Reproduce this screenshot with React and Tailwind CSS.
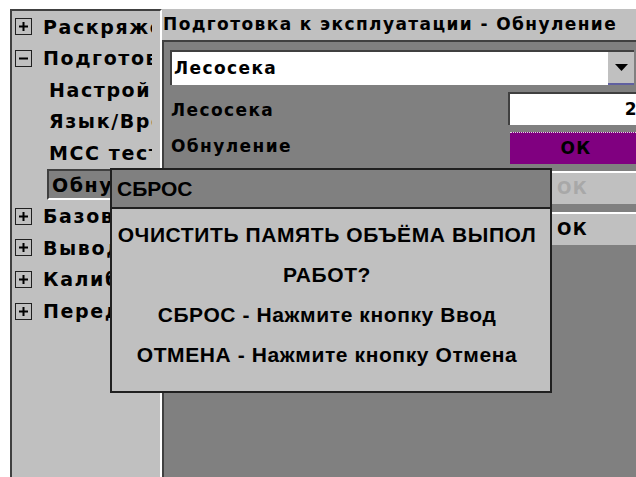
import React from "react";

const SANS = "font-['Liberation_Sans',Arial,sans-serif]";
const WIDE = "font-['DejaVu_Sans',Verdana,sans-serif]";

const treeItems = [
    { label: "Раскряжевка", box: "+" },
    { label: "Подготовка", box: "-" },
    { label: "Настройки", indent: true },
    { label: "Язык/Время", indent: true },
    { label: "МСС тест", indent: true },
    { label: "Обнуление", indent: true, selected: true },
    { label: "Базовые", box: "+" },
    { label: "Вывод", box: "+" },
    { label: "Калибровка", box: "+" },
    { label: "Передача", box: "+" },
];

const ExpandBox = ({ sign }) => (
    <span className="w-[17px] h-[17px] border border-[#202020] bg-[#c0c0c0] flex items-center justify-center shrink-0">
        <svg width="11" height="11" viewBox="0 0 11 11">
            <rect x="1" y="4.5" width="9" height="2" fill="#000" />
            {sign === "+" && <rect x="4.5" y="1" width="2" height="9" fill="#000" />}
        </svg>
    </span>
);

const TreeRow = ({ item }) => {
    if (item.box) {
        return (
            <div className="h-[31.6px] flex items-center pl-[3px] gap-[11px]">
                <ExpandBox sign={item.box} />
                <span className="whitespace-nowrap">{item.label}</span>
            </div>
        );
    }
    if (item.selected) {
        return (
            <div className="h-[31.6px] flex items-center pl-[35px]">
                <span className="h-[31px] w-[80px] flex items-center pl-[3px] bg-[#808080] border-t-2 border-l-2 border-[#404040] border-b-2 border-b-white whitespace-nowrap">
                    {item.label}
                </span>
            </div>
        );
    }
    return (
        <div className="h-[31.6px] flex items-center pl-[37px]">
            <span className="whitespace-nowrap">{item.label}</span>
        </div>
    );
};

const ResetDialog = () => (
    <div className={`absolute left-[110px] top-[168px] w-[442px] h-[225px] border-2 border-[#202020] bg-[#c0c0c0] flex flex-col ${SANS}`}>
        <div className="h-[39px] bg-[#808080] border-b-2 border-[#202020] flex items-center pl-[5px] text-[21px]">
            СБРОС
        </div>
        <div className="flex flex-col items-center pt-[6px] pr-[8px] text-[21px] leading-[40px] tracking-[0.6px]">
            <span className="whitespace-nowrap">ОЧИСТИТЬ ПАМЯТЬ ОБЪЁМА ВЫПОЛ</span>
            <span>РАБОТ?</span>
            <span>СБРОС - Нажмите кнопку Ввод</span>
            <span>ОТМЕНА - Нажмите кнопку Отмена</span>
        </div>
    </div>
);

export default function App() {
    return (
        <div className={`relative w-[636px] h-[477px] bg-white overflow-hidden font-bold text-black ${WIDE}`}>
            <div className="flex h-full pt-[9px] pl-[10px]">
                {/* tree menu */}
                <div className="w-[152px] shrink-0 h-full bg-[#c0c0c0] border-l-2 border-t-2 border-[#404040] border-r-2 border-r-white text-[19px] tracking-[1.6px]">
                    <div className="w-[140px] overflow-hidden">
                        {treeItems.map((item) => (
                            <TreeRow key={item.label} item={item} />
                        ))}
                    </div>
                </div>

                {/* page */}
                <div className="w-[478px] shrink-0 flex flex-col text-[17px] tracking-[1.4px]">
                    <div className="h-[31px] bg-[#c0c0c0] flex items-center pl-[1px] whitespace-nowrap">
                        Подготовка к эксплуатации - Обнуление
                    </div>
                    <div className="flex-1 bg-[#808080] border-t-2 border-l-2 border-[#404040] pl-[6px] pt-[8px] flex flex-col">
                        <div className="h-[35px] mr-[6px] bg-white border-t-2 border-l-2 border-[#404040] flex items-center">
                            <span className="flex-1 pl-[2px]">Лесосека</span>
                            <span className="w-[26px] h-full bg-[#c0c0c0] border-b-2 border-[#6060a0] flex items-center justify-center">
                                <svg width="13" height="7" viewBox="0 0 13 7">
                                    <path d="M0 0 H13 L6.5 7 Z" fill="#000" />
                                </svg>
                            </span>
                        </div>

                        <div className="h-[33px] mt-[7px] flex items-center">
                            <span className="flex-1 pl-[1px] pt-[4px]">Лесосека</span>
                            <span className="w-[132px] h-full bg-white border-t-2 border-l-2 border-[#404040] flex items-center justify-end pr-[2px]">
                                2
                            </span>
                        </div>

                        <div className="h-[32px] mt-[7px] flex items-center">
                            <span className="flex-1 pl-[1px] pb-[2px]">Обнуление</span>
                            <span className="w-[130px] h-full bg-[#800080] border-t border-dotted border-[#e0e0e0] flex items-center justify-center pl-[2px]">
                                ОК
                            </span>
                        </div>

                        <div className="h-[33px] mt-[7px] flex justify-end">
                            <span className="w-[88px] h-full bg-[#c0c0c0] border-t-2 border-white flex items-center pl-[5px] text-[#a8a8a8]">
                                ОК
                            </span>
                        </div>

                        <div className="h-[33px] mt-[8px] flex justify-end">
                            <span className="w-[88px] h-full bg-[#c0c0c0] border-t-2 border-white flex items-center pl-[5px]">
                                ОК
                            </span>
                        </div>
                    </div>
                </div>
            </div>

            <ResetDialog />
        </div>
    );
}
